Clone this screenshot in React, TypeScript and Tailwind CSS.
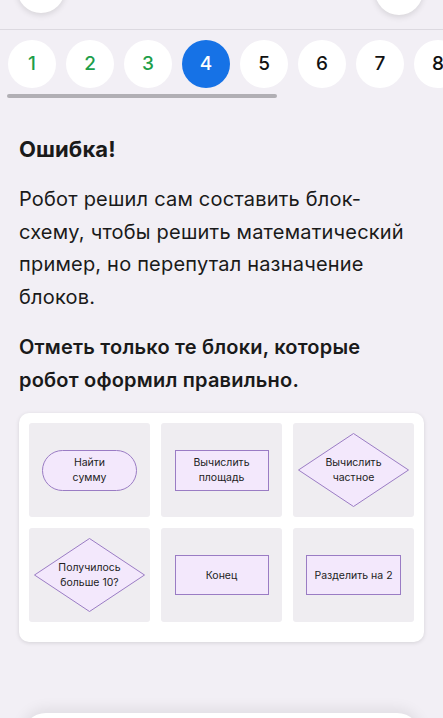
import React from "react";

const font = { fontFamily: "Inter, 'Noto Sans', sans-serif" };

function Diamond({ lines }: { lines: string[] }) {
  return (
    <div className="relative w-[111px] h-[74px] flex items-center justify-center">
      <svg className="absolute inset-0" width="111" height="74" viewBox="0 0 111 74">
        <polygon points="55.5,0.5 110.5,37 55.5,73.5 0.5,37" fill="#f3e8fc" stroke="#9a7cc4" strokeWidth="1" />
      </svg>
      <div className="relative text-center">
        {lines.map((l) => (
          <div key={l}>{l}</div>
        ))}
      </div>
    </div>
  );
}

function Cell({ children }: { children: React.ReactNode }) {
  return <div className="bg-[#efedf1] rounded-[3px] h-[94px] flex items-center justify-center">{children}</div>;
}

export default function App() {
  const nums = [1, 2, 3, 4, 5, 6, 7, 8];
  return (
    <div className="w-[443px] h-[718px] overflow-hidden bg-[#f2eff5] text-[#1a1a1a]" style={font}>
      <div className="h-[29px] overflow-hidden flex justify-between pl-[17px] pr-[20px]">
        <div className="w-[48px] h-[48px] rounded-full bg-white mt-[-35px] shadow-[0_2px_6px_rgba(0,0,0,0.12)]" />
        <div className="w-[48px] h-[48px] rounded-full bg-white mt-[-33px] shadow-[0_2px_6px_rgba(0,0,0,0.12)]" />
      </div>
      <div className="h-px bg-[#dcd9e0]" />
      <div className="pt-[10px] overflow-hidden">
        <div className="flex gap-[10px] pl-[8px]">
          {nums.map((n) => (
            <div
              key={n}
              className={
                "shrink-0 w-[48px] h-[48px] rounded-full flex items-center justify-center text-[19px] font-medium " +
                (n === 4 ? "bg-[#1672e6] text-white" : n < 4 ? "bg-white text-[#1e9e4a]" : "bg-white text-[#111]")
              }
            >
              {n}
            </div>
          ))}
        </div>
        <div className="mt-[6px] ml-[7px] w-[270px] h-[4px] rounded-full bg-[#b1afb4]" />
      </div>
      <div className="px-[19px]">
        <h1 className="mt-[37px] text-[22px] leading-[28px] font-bold tracking-[0.1px]">Ошибка!</h1>
        <p className="mt-[20px] text-[20px] leading-[32.5px] tracking-[0.2px]">
          Робот решил сам составить блок-
          <br />
          схему, чтобы решить математический
          <br />
          пример, но перепутал назначение
          <br />
          блоков.
        </p>
        <p className="mt-[18px] text-[20px] leading-[32.5px] font-semibold tracking-[0.2px]">
          Отметь только те блоки, которые
          <br />
          робот оформил правильно.
        </p>
        <div className="mt-[17px] bg-white rounded-[10px] shadow-[0_1px_4px_rgba(0,0,0,0.12)] pt-[10px] px-[10px] pb-[20px] w-[405px]">
          <div className="grid grid-cols-3 gap-[11px] text-[10.5px] leading-[15px] text-[#222]">
            <Cell>
              <div className="w-[95px] h-[41px] rounded-full border border-[#9a7cc4] bg-[#f3e8fc] flex flex-col items-center justify-center text-center">
                <div>Найти</div>
                <div>сумму</div>
              </div>
            </Cell>
            <Cell>
              <div className="w-[94px] h-[41px] border border-[#9a7cc4] bg-[#f3e8fc] flex flex-col items-center justify-center text-center">
                <div>Вычислить</div>
                <div>площадь</div>
              </div>
            </Cell>
            <Cell>
              <Diamond lines={["Вычислить", "частное"]} />
            </Cell>
            <Cell>
              <Diamond lines={["Получилось", "больше 10?"]} />
            </Cell>
            <Cell>
              <div className="w-[94px] h-[40px] border border-[#9a7cc4] bg-[#f3e8fc] flex items-center justify-center">
                Конец
              </div>
            </Cell>
            <Cell>
              <div className="w-[95px] h-[40px] border border-[#9a7cc4] bg-[#f3e8fc] flex items-center justify-center">
                Разделить на 2
              </div>
            </Cell>
          </div>
        </div>
      </div>
      <div className="mt-[71px] mx-[22px] h-[40px] bg-white rounded-t-[24px] shadow-[0_-4px_14px_rgba(0,0,0,0.08)]" />
    </div>
  );
}
